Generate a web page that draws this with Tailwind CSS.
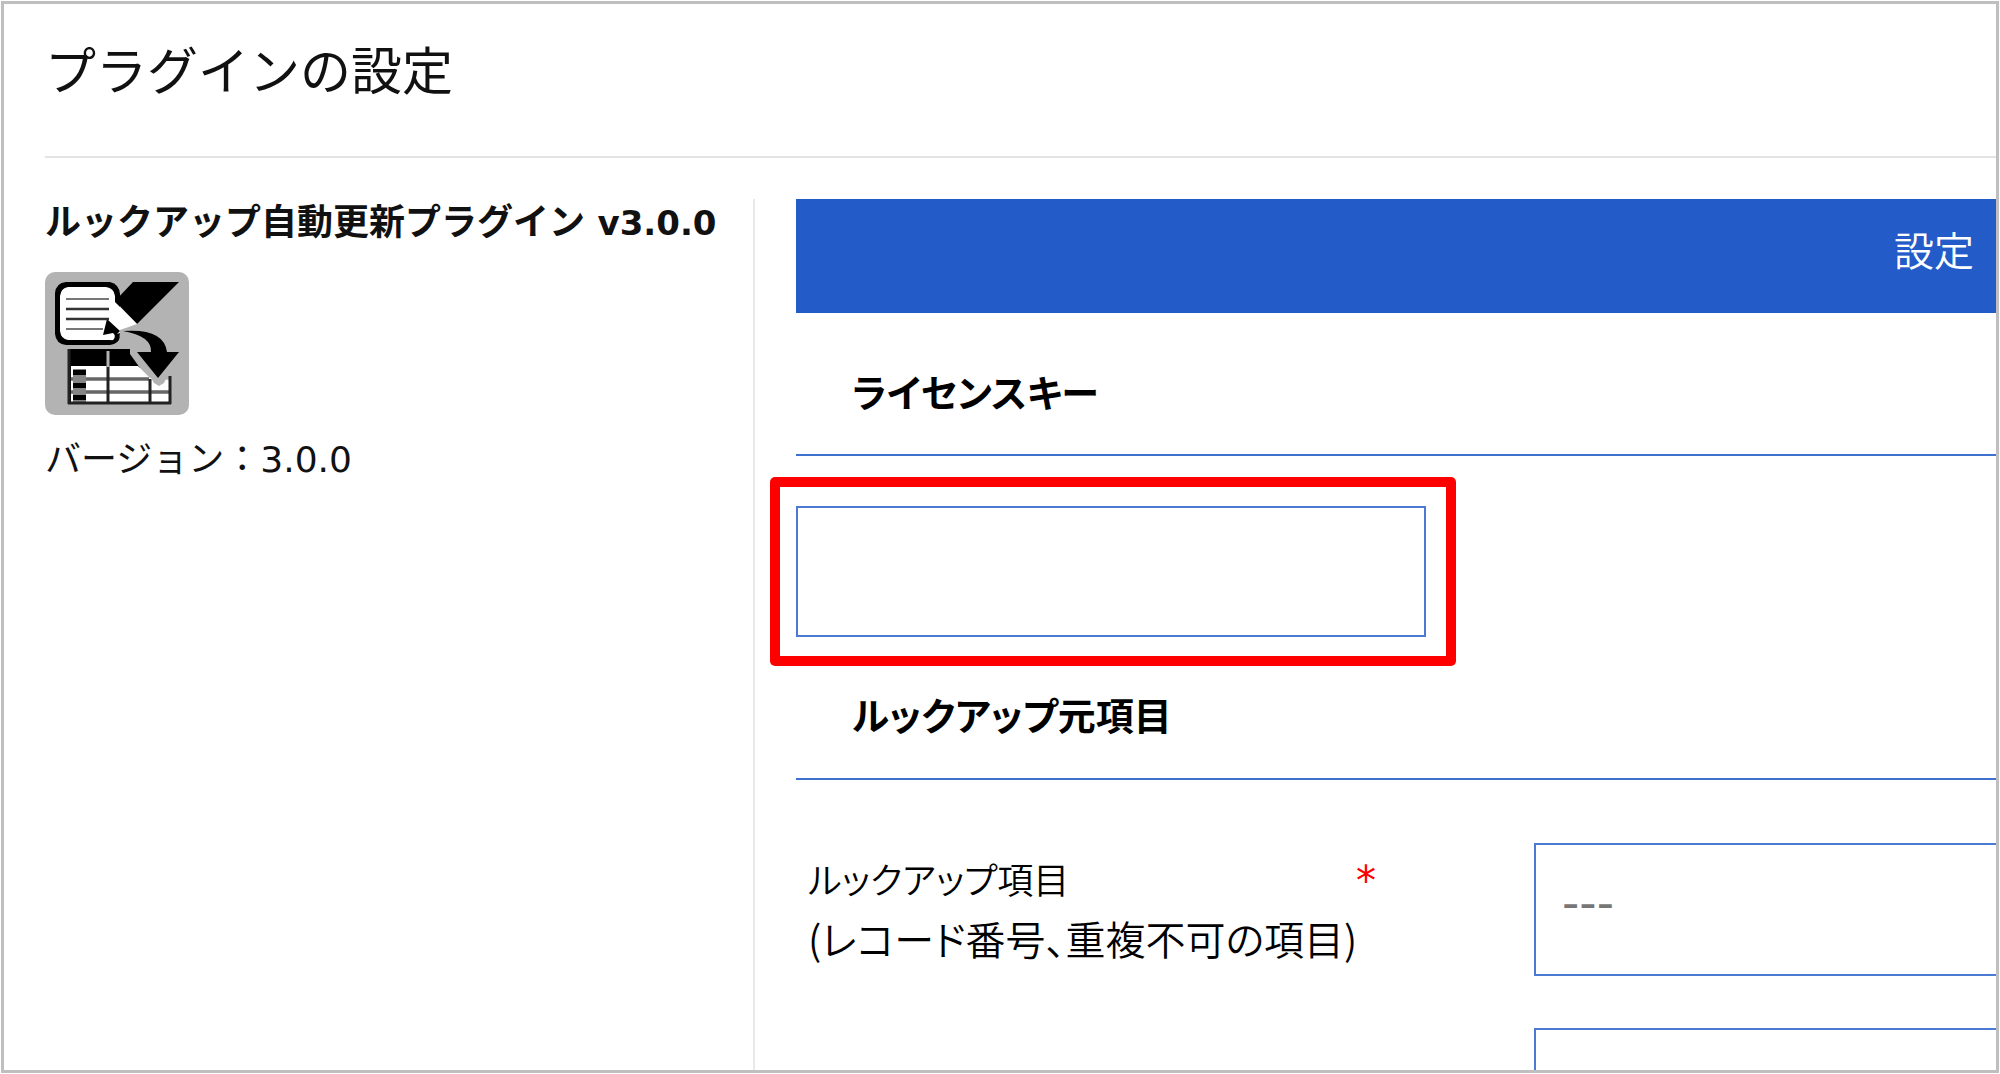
<!DOCTYPE html>
<html lang="ja">
<head>
<meta charset="utf-8">
<title>プラグインの設定</title>
<script src="https://cdn.jsdelivr.net/npm/@tailwindcss/browser@4"></script>
</head>
<body class="bg-white p-px font-['DejaVu_Sans','Noto_Sans_CJK_JP',sans-serif] text-[#111]">
<div class="flex h-[calc(100vh-2px)] flex-col overflow-hidden border-3 border-[#bfbfbf] pl-[41px]">
  <header class="h-[154px] shrink-0 border-b-2 border-[#e3e3e3] pt-[26px]">
    <h1 class="font-['Noto_Sans_CJK_JP',sans-serif] text-[51px] leading-[76px]">プラグインの設定</h1>
  </header>
  <div class="flex grow pt-[41px]">
    <aside class="w-[710px] shrink-0 border-r-2 border-[#e6eaea]">
      <h2 class="text-4xl leading-[48px] font-bold whitespace-nowrap">ルックアップ自動更新プラグイン <span class="text-[34px]">v3.0.0</span></h2>
      <svg class="mt-[25px] h-[143px] w-36" viewBox="0 0 144 143" role="img" aria-label="プラグインのアイコン">
        <rect width="144" height="143" rx="10" fill="#b3b3b3"/>
        <path d="M88 10h46L92 52 70 29Z"/>
        <path d="M21 10h44q9 2 10 12v42q-1 8-10 9H21q-10-1-11-11V21q1-10 11-11Z"/>
        <path d="M23 15h38q8 1 9 9v6l22 22-17 6v6q-2 5-10 4H23q-7-1-8-9V24q1-8 8-9Z" fill="#fff"/>
        <path d="M62 47l13 12-3 3 3-1q0 8-7 10H58q8 0 11-4 2-4-1-6l-10 2Z"/>
        <path d="M21 27h43M21 57h37" stroke="#777" stroke-width="2"/>
        <path d="M21 37h43M21 47h43" stroke="#333" stroke-width="2.5"/>
        <path d="M23 77h62v5l10 14v36H23Z"/>
        <path d="M26 94h67l17 17v19H26Z" fill="#fff"/>
        <path d="M104 106l21 2v23H88v-25Z" fill="#fff"/>
        <path d="M26 107h78M26 120h98" stroke="#666" stroke-width="3.5"/>
        <path d="M28 97h13v33H28Z" fill="#858585"/>
        <path d="M28 98h13v5H28ZM28 111h13v5H28ZM28 123h13v5H28Z"/>
        <path d="M63 94v37M105 107v24M125 104v28M24 77v55M23 131h103" stroke="#222" stroke-width="3" fill="none"/>
        <path d="M63 79v16" stroke="#b3b3b3" stroke-width="3"/>
        <path d="M79 60Q104 66 106 83L92 80 109 111 114 114 119 111 134 80H121Q119 56 79 59Z" fill="#b3b3b3"/>
        <path d="M85 77l25 32q4 6 9 0l-5-8Z" fill="#b3b3b3"/>
        <path d="M78 59Q119 56 122 80h12L113 106 92 80h14Q107 64 78 59Z"/>
      </svg>
      <p class="mt-[21px] text-4xl leading-[48px]">バージョン：3.0.0</p>
    </aside>
    <main class="min-w-0 grow pl-[41px] font-['Noto_Sans_CJK_JP',sans-serif] text-black">
      <div class="flex h-[114px] justify-end bg-[#235bc8] pr-[22px]">
        <button type="button" class="pb-[14px] text-[40px] font-[350] text-white">設定</button>
      </div>
      <h3 class="h-[143px] border-b-2 border-[#3e71ce] pt-12 pl-14 text-[38px] leading-[60px] font-bold [font-feature-settings:'palt']"><label for="license">ライセンスキー</label></h3>
      <div class="mt-[21px] -ml-[26px] w-[686px] rounded-[5px] bg-[#f00] p-[10px]">
        <div class="bg-white px-4 py-[19px]">
          <input id="license" type="text" class="block h-[131px] w-[630px] border-2 border-[#4c7ad2] bg-white px-7 text-[40px]">
        </div>
      </div>
      <h3 class="h-[114px] border-b-2 border-[#3e71ce] pt-[18px] pl-14 text-[38px] leading-[60px] font-bold [font-feature-settings:'palt']">ルックアップ元項目</h3>
      <div class="mt-[63px] flex">
        <div class="flex w-[738px] shrink-0 pt-1 pl-3">
          <label for="lookup" class="block w-[548px] text-[40px] leading-[60px] font-[350] whitespace-nowrap [font-feature-settings:'palt']"><span class="text-4xl leading-[60px]">ルックアップ項目</span><br>(レコード番号、重複不可の項目)</label>
          <span class="pt-1 font-['DejaVu_Sans',sans-serif] text-[40px] leading-[60px] text-[#f00]">*</span>
        </div>
        <div class="flex min-w-0 grow flex-col gap-[52px]">
          <select id="lookup" class="block h-[133px] w-full appearance-none border-2 border-r-0 border-[#4c7ad2] bg-white px-[26px] pb-4 font-['DejaVu_Sans',sans-serif] text-5xl text-[#777]"><option>---</option></select>
          <input type="text" aria-label="ルックアップ項目の値" class="block h-[133px] w-full border-2 border-r-0 border-[#4c7ad2] bg-white px-7 text-[40px]">
        </div>
      </div>
    </main>
  </div>
</div>
</body>
</html>
